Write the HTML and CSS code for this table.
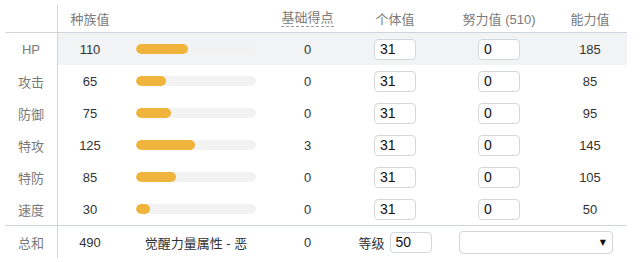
FILE: index.html
```html
<!DOCTYPE html>
<html lang="zh">
<head>
<meta charset="utf-8">
<link rel="stylesheet" href="styles.css">
</head>
<body>
<div class="stats">
  <div class="row head">
    <div class="lab"></div>
    <div class="c">种族值</div>
    <div></div>
    <div class="c"><span class="dotted">基础得点</span></div>
    <div class="c">个体值</div>
    <div class="c">努力值 (510)</div>
    <div class="c">能力值</div>
  </div>
  <div class="row hl">
    <div class="lab">HP</div>
    <div class="c num">110</div>
    <div class="barcell"><div class="track"><div class="fill" style="width:52px"></div></div></div>
    <div class="c num">0</div>
    <div class="c"><input class="box" value="31"></div>
    <div class="c"><input class="box" value="0"></div>
    <div class="c num">185</div>
  </div>
  <div class="row">
    <div class="lab">攻击</div>
    <div class="c num">65</div>
    <div class="barcell"><div class="track"><div class="fill" style="width:30px"></div></div></div>
    <div class="c num">0</div>
    <div class="c"><input class="box" value="31"></div>
    <div class="c"><input class="box" value="0"></div>
    <div class="c num">85</div>
  </div>
  <div class="row">
    <div class="lab">防御</div>
    <div class="c num">75</div>
    <div class="barcell"><div class="track"><div class="fill" style="width:35px"></div></div></div>
    <div class="c num">0</div>
    <div class="c"><input class="box" value="31"></div>
    <div class="c"><input class="box" value="0"></div>
    <div class="c num">95</div>
  </div>
  <div class="row">
    <div class="lab">特攻</div>
    <div class="c num">125</div>
    <div class="barcell"><div class="track"><div class="fill" style="width:59px"></div></div></div>
    <div class="c num">3</div>
    <div class="c"><input class="box" value="31"></div>
    <div class="c"><input class="box" value="0"></div>
    <div class="c num">145</div>
  </div>
  <div class="row">
    <div class="lab">特防</div>
    <div class="c num">85</div>
    <div class="barcell"><div class="track"><div class="fill" style="width:40px"></div></div></div>
    <div class="c num">0</div>
    <div class="c"><input class="box" value="31"></div>
    <div class="c"><input class="box" value="0"></div>
    <div class="c num">105</div>
  </div>
  <div class="row">
    <div class="lab">速度</div>
    <div class="c num">30</div>
    <div class="barcell"><div class="track"><div class="fill" style="width:14px"></div></div></div>
    <div class="c num">0</div>
    <div class="c"><input class="box" value="31"></div>
    <div class="c"><input class="box" value="0"></div>
    <div class="c num">50</div>
  </div>
  <div class="row total">
    <div class="lab">总和</div>
    <div class="c num">490</div>
    <div class="c num">觉醒力量属性 - 恶</div>
    <div class="c num">0</div>
    <div class="c level"><span class="lvl">等级</span><input class="box" value="50"></div>
    <div class="c span2"><div class="select"><span class="arrow">▼</span></div></div>
  </div>
</div>
</body>
</html>
```

FILE: styles.css
```css
* { box-sizing: border-box; }
body {
  margin: 0;
  background: #fff;
  font-family: "Liberation Sans", "Noto Sans CJK SC", sans-serif;
  font-size: 13px;
  color: #333;
}
.stats {
  margin: 5px 0 0 5px;
  width: 622px;
}
.row {
  display: grid;
  grid-template-columns: 53px 64px 148px 75px 100px 108px 74px;
  height: 32px;
  align-items: center;
}
.row > div { height: 100%; display: flex; align-items: center; }
.head {
  height: 28px;
  border-bottom: 1px solid #cfd5dc;
  color: #7a7a7a;
}
.head > div { padding-bottom: 1px; }
.lab {
  justify-content: center;
  color: #7a7a7a;
  border-right: 1px solid #cfd5dc;
  background: #fff;
}
.c { justify-content: center; }
.num { color: #333; }
.hl { background: #f1f3f5; }
.dotted {
  border-bottom: 1px dashed #9a9a9a;
  line-height: 16px;
}
.barcell { padding-left: 14px; }
.track {
  width: 120px;
  height: 10px;
  border-radius: 5px;
  background: #f2f2f2;
  overflow: hidden;
}
.fill {
  height: 10px;
  border-radius: 5px;
  background: #f0b43c;
}
.box {
  width: 42px;
  height: 21px;
  border: 1px solid #d3d6da;
  border-radius: 4px;
  background: #fff;
  padding: 0 0 0 5px;
  font-family: "Liberation Sans", sans-serif;
  font-size: 14px;
  color: #111;
  outline: none;
}
.total {
  border-top: 1px solid #cfd5dc;
  height: 33px;
}
.level { gap: 5px; }
.lvl { color: #333; }
.span2 { grid-column: span 2; }
.select {
  width: 154px;
  height: 23px;
  border: 1px solid #d3d6da;
  border-radius: 4px;
  display: flex;
  align-items: center;
  justify-content: flex-end;
  padding-right: 6px;
}
.arrow {
  font-family: "DejaVu Sans", sans-serif;
  font-size: 8px;
  color: #111;
}
```
